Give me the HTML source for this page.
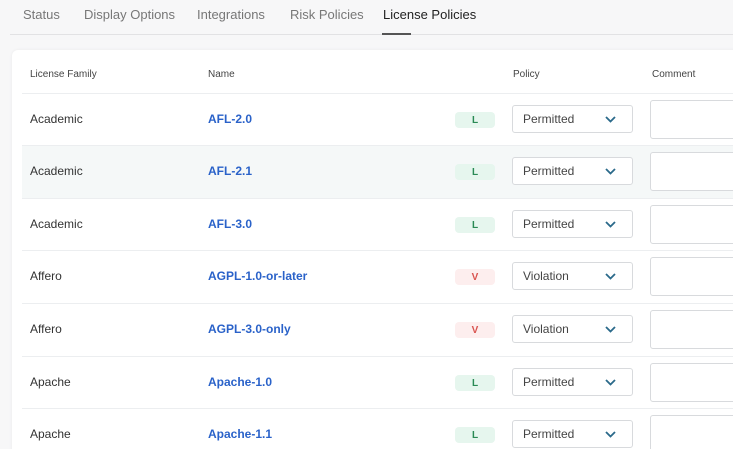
<!DOCTYPE html><html><head><style>
html,body{margin:0;width:733px;height:449px;overflow:hidden}
body{background:#f7f7f8;font-family:"Liberation Sans",sans-serif;position:relative}
.tab{position:absolute;top:7px;font-size:13px;color:#777}
.line{position:absolute;left:10px;right:0;top:34px;height:1px;background:#e2e2e4}
.card{position:absolute;left:12px;top:50px;width:740px;height:420px;background:#fff;border-radius:6px;box-shadow:0 0 3px rgba(0,0,0,.06)}
.h{position:absolute;top:69px;font-size:10px;color:#444}
.row{position:absolute;left:22px;width:720px;height:52px;border-top:1px solid #eceef0}
.row .f{position:absolute;left:8px;top:18px;font-size:12px;color:#333}
.row .n{position:absolute;left:186px;top:18px;font-size:12px;color:#2a62c9;font-weight:bold}
.b{position:absolute;left:433px;top:18px;width:40px;height:16px;border-radius:4px;font-size:10px;font-weight:bold;text-align:center;line-height:17px}
.L{background:#e6f6ee;color:#2a8a55}.V{background:#fdeeee;color:#d9534f}
.s{position:absolute;left:490px;top:11px;width:109px;height:26px;border:1px solid #d8dadd;border-radius:3px;font-size:12px;color:#444;line-height:26px;padding-left:10px}
.s svg{position:absolute;right:16px;top:10px}
.c{position:absolute;left:628px;top:6px;width:100px;height:37px;border:1px solid #d8dadd;border-radius:3px}
</style></head><body>
<div class="tab" style="left:23px">Status</div>
<div class="tab" style="left:84px">Display Options</div>
<div class="tab" style="left:197px">Integrations</div>
<div class="tab" style="left:290px">Risk Policies</div>
<div class="tab" style="left:383px;color:#222">License Policies</div>
<div class="line"></div>
<div style="position:absolute;left:382px;top:33px;width:29px;height:2px;background:#555"></div>
<div class="card"></div>
<div class="h" style="left:30px">License Family</div>
<div class="h" style="left:208px">Name</div>
<div class="h" style="left:513px">Policy</div>
<div class="h" style="left:652px">Comment</div>
<div class="row" style="top:93px"><span class="f">Academic</span><span class="n">AFL-2.0</span><span class="b L">L</span><div class="s">Permitted<svg width="11" height="7"><path d="M1 1l4.5 4.5L10 1" stroke="#2b6a8a" stroke-width="1.8" fill="none"/></svg></div><div class="c"></div></div>
<div class="row" style="top:145px;background:#f5f8f8"><span class="f">Academic</span><span class="n">AFL-2.1</span><span class="b L">L</span><div class="s" style="background:#fff">Permitted<svg width="11" height="7"><path d="M1 1l4.5 4.5L10 1" stroke="#2b6a8a" stroke-width="1.8" fill="none"/></svg></div><div class="c" style="background:#fff"></div></div>
<div class="row" style="top:198px"><span class="f">Academic</span><span class="n">AFL-3.0</span><span class="b L">L</span><div class="s">Permitted<svg width="11" height="7"><path d="M1 1l4.5 4.5L10 1" stroke="#2b6a8a" stroke-width="1.8" fill="none"/></svg></div><div class="c"></div></div>
<div class="row" style="top:250px"><span class="f">Affero</span><span class="n">AGPL-1.0-or-later</span><span class="b V">V</span><div class="s">Violation<svg width="11" height="7"><path d="M1 1l4.5 4.5L10 1" stroke="#2b6a8a" stroke-width="1.8" fill="none"/></svg></div><div class="c"></div></div>
<div class="row" style="top:303px"><span class="f">Affero</span><span class="n">AGPL-3.0-only</span><span class="b V">V</span><div class="s">Violation<svg width="11" height="7"><path d="M1 1l4.5 4.5L10 1" stroke="#2b6a8a" stroke-width="1.8" fill="none"/></svg></div><div class="c"></div></div>
<div class="row" style="top:356px"><span class="f">Apache</span><span class="n">Apache-1.0</span><span class="b L">L</span><div class="s">Permitted<svg width="11" height="7"><path d="M1 1l4.5 4.5L10 1" stroke="#2b6a8a" stroke-width="1.8" fill="none"/></svg></div><div class="c"></div></div>
<div class="row" style="top:408px"><span class="f">Apache</span><span class="n">Apache-1.1</span><span class="b L">L</span><div class="s">Permitted<svg width="11" height="7"><path d="M1 1l4.5 4.5L10 1" stroke="#2b6a8a" stroke-width="1.8" fill="none"/></svg></div><div class="c"></div></div>
</body></html>
